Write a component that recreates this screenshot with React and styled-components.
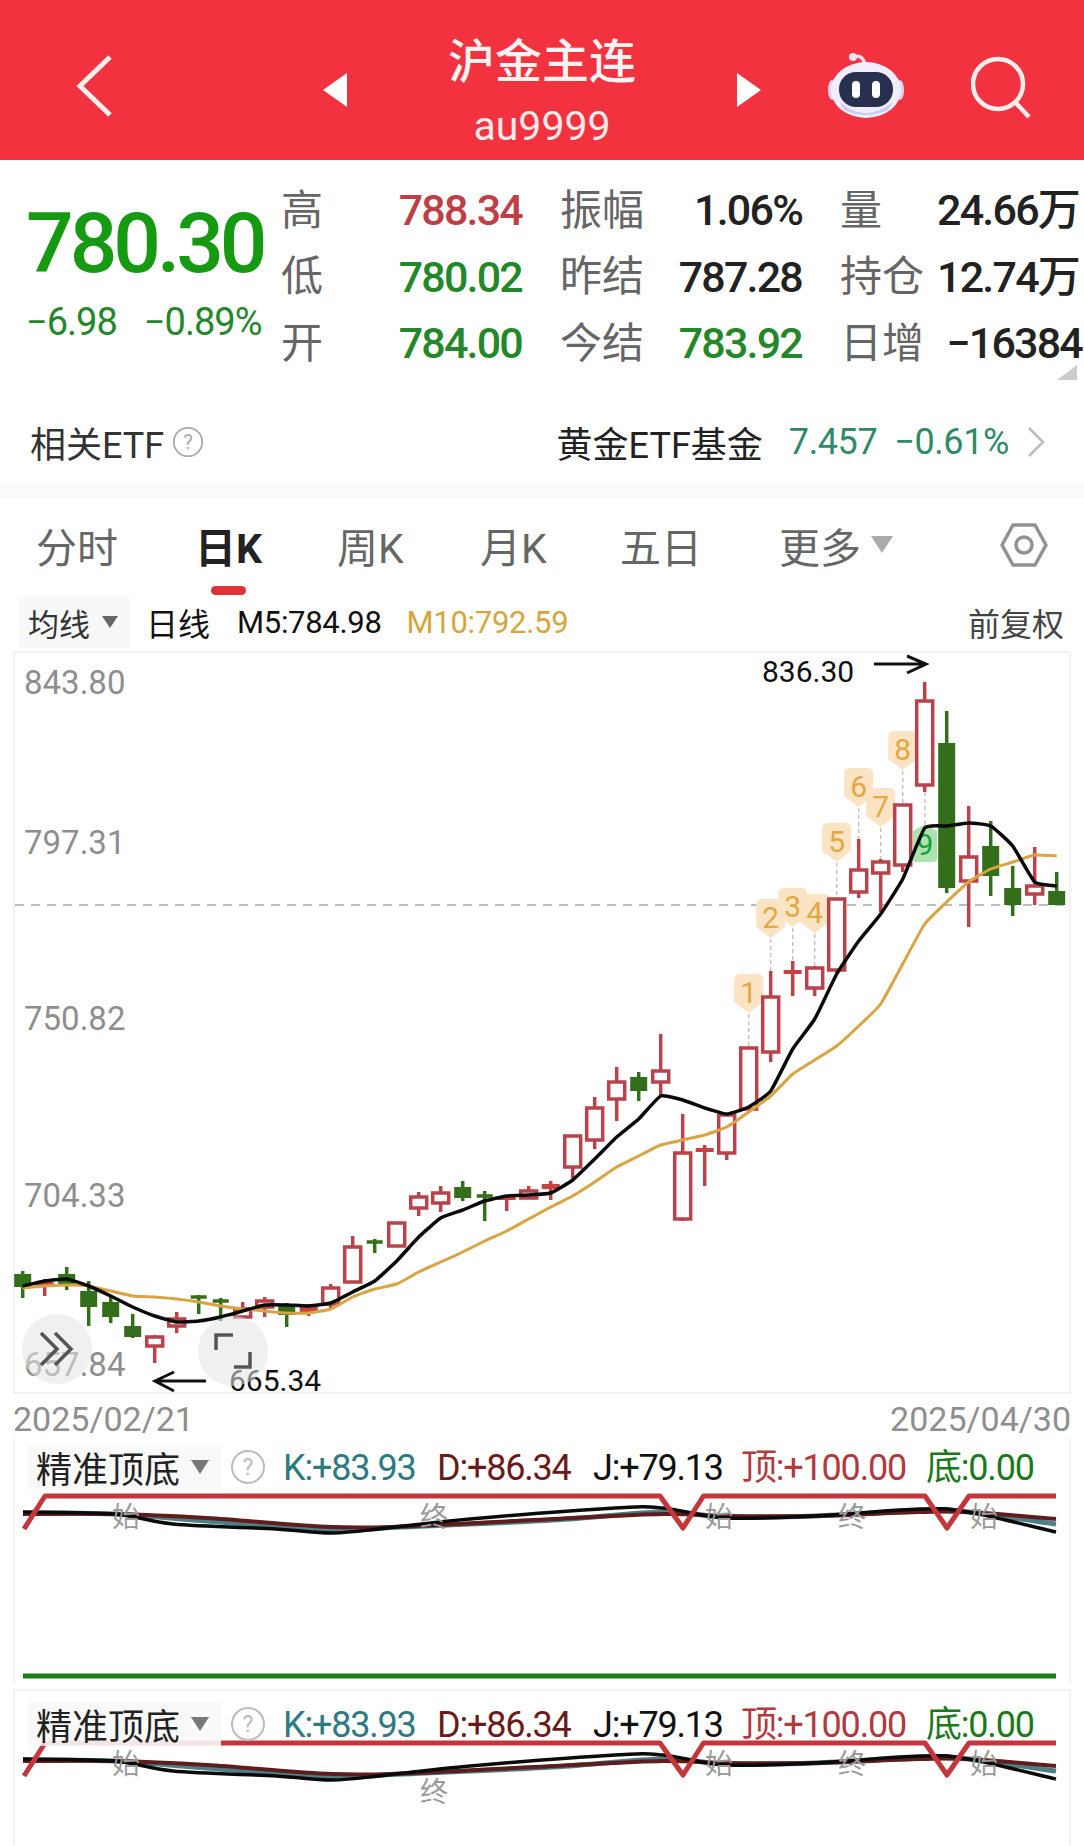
import styled, { createGlobalStyle } from "styled-components";

const GlobalStyle = createGlobalStyle`
	html, body {
		margin: 0;
		padding: 0;
		background: #fff;
	}
	body {
		font-family: Roboto, "Noto Sans CJK SC", sans-serif;
	}
`;

const RED = "#b8434a";
const GREEN = "#336e1a";
const UP_GREEN = "#24872a";

// kind, bodyTop, bodyBottom, wickTop, wickBottom
const candles = [
	["g", 1275, 1288, 1272, 1299],
	["f", 1283, 1288, 1280, 1297],
	["g", 1275, 1285, 1268, 1291],
	["g", 1292, 1308, 1282, 1327],
	["g", 1303, 1318, 1297, 1324],
	["g", 1327, 1338, 1315, 1339],
	["r", 1337, 1347, 1336, 1364],
	["r", 1319, 1327, 1313, 1334],
	["d", 1298, 1298, 1296, 1315],
	["d", 1302, 1302, 1299, 1322],
	["r", 1309, 1318, 1303, 1318],
	["r", 1301, 1308, 1298, 1318],
	["g", 1306, 1316, 1304, 1328],
	["f", 1307, 1313, 1305, 1317],
	["r", 1288, 1305, 1285, 1310],
	["r", 1247, 1283, 1237, 1284],
	["d", 1243, 1243, 1240, 1254],
	["r", 1223, 1247, 1223, 1247],
	["r", 1197, 1209, 1193, 1217],
	["r", 1193, 1204, 1187, 1213],
	["g", 1188, 1199, 1182, 1202],
	["d", 1197, 1197, 1192, 1222],
	["f", 1197, 1201, 1196, 1212],
	["r", 1191, 1199, 1187, 1199],
	["f", 1185, 1190, 1182, 1201],
	["r", 1136, 1168, 1136, 1179],
	["r", 1108, 1141, 1098, 1150],
	["r", 1082, 1100, 1068, 1122],
	["g", 1078, 1092, 1073, 1102],
	["r", 1071, 1083, 1035, 1097],
	["r", 1153, 1220, 1115, 1222],
	["f", 1149, 1153, 1146, 1187],
	["r", 1115, 1154, 1115, 1161],
	["r", 1048, 1110, 1048, 1110],
	["r", 997, 1053, 972, 1063],
	["f", 971, 975, 962, 997],
	["r", 968, 989, 967, 997],
	["r", 899, 971, 899, 975],
	["r", 870, 893, 840, 899],
	["r", 862, 874, 860, 913],
	["r", 805, 866, 805, 873],
	["r", 701, 786, 683, 793],
	["g", 744, 889, 712, 894],
	["r", 857, 882, 807, 928],
	["g", 847, 877, 822, 897],
	["g", 889, 906, 867, 917],
	["r", 886, 895, 848, 906],
	["g", 892, 906, 873, 906],
];

const candleX = (i) => 22.7 + 22 * i;

const ma5 = [1287, 1282, 1280, 1287, 1297, 1308, 1317, 1323, 1322, 1318, 1312, 1306, 1306, 1307, 1304, 1293, 1282, 1262, 1238, 1219, 1211, 1202, 1197, 1196, 1194, 1181, 1160, 1138, 1120, 1097, 1101, 1109, 1115, 1108, 1092, 1050, 1020, 975, 942, 915, 880, 829, 827, 824, 827, 847, 883, 887];
const ma10 = [1289, 1287, 1286, 1287, 1292, 1297, 1298, 1300, 1303, 1307, 1310, 1312, 1314, 1314, 1310, 1298, 1290, 1285, 1273, 1263, 1253, 1242, 1232, 1220, 1208, 1197, 1183, 1168, 1157, 1146, 1141, 1136, 1128, 1113, 1097, 1075, 1061, 1047, 1027, 1005, 965, 925, 903, 883, 870, 863, 856, 857];

// light catmull-rom, just enough to take the edge off the joints
const smoothPath = (pts, tension = 14) => {
	let d = `M${pts[0][0]} ${pts[0][1]}`;
	for (let i = 0; i < pts.length - 1; i++) {
		const p0 = pts[i - 1] || pts[i];
		const p1 = pts[i];
		const p2 = pts[i + 1];
		const p3 = pts[i + 2] || p2;
		const c1x = p1[0] + (p2[0] - p0[0]) / tension;
		const c1y = p1[1] + (p2[1] - p0[1]) / tension;
		const c2x = p2[0] - (p3[0] - p1[0]) / tension;
		const c2y = p2[1] - (p3[1] - p1[1]) / tension;
		d += ` C${c1x} ${c1y} ${c2x} ${c2y} ${p2[0]} ${p2[1]}`;
	}
	return d;
};

const maPath = (ys) => smoothPath(ys.map((y, i) => [candleX(i), y]));

const badges = [
	{ n: 1, i: 33, y: 993 },
	{ n: 2, i: 34, y: 918 },
	{ n: 3, i: 35, y: 907 },
	{ n: 4, i: 36, y: 913 },
	{ n: 5, i: 37, y: 842 },
	{ n: 6, i: 38, y: 787 },
	{ n: 7, i: 39, y: 807 },
	{ n: 8, i: 40, y: 750 },
];

const kdjBlack = [[23, 1513], [114, 1515], [173, 1525], [276, 1530], [332, 1534], [387, 1529], [470, 1520], [615, 1509], [663, 1509], [726, 1519], [815, 1517], [919, 1510], [968, 1513], [1056, 1533]];
const kdjRed = [[23, 1515], [114, 1515], [207, 1519], [332, 1528], [415, 1527], [553, 1520], [663, 1515], [726, 1517], [815, 1517], [919, 1513], [968, 1513], [1056, 1520]];
const kdjTeal = [[23, 1514], [114, 1515], [207, 1522], [332, 1531], [401, 1528], [553, 1521], [663, 1513], [726, 1518], [815, 1517], [919, 1512], [968, 1513], [1056, 1525]];
const topLine = "24,1530 45,1497 660,1497 683,1529 703.5,1497 925,1497 947,1529 969,1497 1056,1497";

const Page = styled.div`
	position: relative;
	width: 1084px;
	height: 1846px;
	overflow: hidden;
	background: #fff;
	color: #222;
`;

const Header = styled.header`
	display: flex;
	align-items: center;
	box-sizing: border-box;
	height: 160px;
	padding: 20px 0 0 76px;
	background: #f2323f;
`;

const BackIcon = styled.svg`
	width: 37px;
	height: 62px;
	margin: -8px 210px 0 0;
`;

const Arrow = styled.svg`
	width: 24px;
	height: 34px;
`;

const TitleBlock = styled.div`
	display: flex;
	flex-direction: column;
	align-items: center;
	gap: 11px;
	width: 390px;
`;

const Title = styled.div`
	font-size: 47px;
	font-weight: 500;
	line-height: 60px;
	color: #fdf2f2;
`;

const Code = styled.div`
	font-size: 41px;
	line-height: 46px;
	color: #fbeaea;
`;

const RobotIcon = styled.svg`
	width: 76px;
	height: 66px;
	margin: -10px 0 0 67px;
`;

const SearchIcon = styled.svg`
	width: 62px;
	height: 64px;
	margin: -6px 0 0 67px;
`;

const Quote = styled.section`
	position: relative;
	display: flex;
	padding-top: 15px;
`;

const PriceBlock = styled.div`
	width: 255px;
	padding-left: 26px;
	color: ${UP_GREEN};
`;

const Price = styled.div`
	margin-top: 29px;
	font-size: 84px;
	font-weight: 500;
	line-height: 80px;
	letter-spacing: -4.1px;
	white-space: nowrap;
	color: #169a12;
`;

const Change = styled.div`
	display: flex;
	gap: 27px;
	margin-top: 18px;
	font-size: 38px;
	line-height: 40px;
	letter-spacing: -1px;
	white-space: nowrap;
`;

const StatGrid = styled.div`
	display: grid;
	grid-template-columns: 241px 242px 242px;
	grid-auto-rows: 66.5px;
	column-gap: 38px;
`;

const Stat = styled.div`
	display: flex;
	align-items: center;
	justify-content: space-between;
	white-space: nowrap;
`;

const StatLabel = styled.span`
	padding-bottom: 4px;
	font-size: 42px;
	color: #666;
`;

const StatValue = styled.span`
	margin-right: ${(props) => props.$inset || 0}px;
	padding-top: 4px;
	font-size: 43px;
	font-weight: 500;
	line-height: 50px;
	letter-spacing: -1.8px;
	color: ${(props) => props.$color || "#222"};
`;

const CornerMark = styled.div`
	position: absolute;
	top: 205px;
	left: 1057px;
	width: 0;
	height: 0;
	border-left: 20px solid transparent;
	border-bottom: 15px solid #ccc;
`;

const EtfRow = styled.div`
	display: flex;
	align-items: center;
	height: 60px;
	margin-top: 37px;
	padding-left: 30px;
	font-size: 36px;
	color: #333;
`;

const EtfHelp = styled.svg`
	width: 32px;
	height: 32px;
	margin-left: 8px;
`;

const EtfName = styled.span`
	margin-left: auto;
	font-size: 36px;
	color: #222;
`;

const EtfNumber = styled.span`
	margin-left: ${(props) => props.$gap}px;
	font-size: 36px;
	letter-spacing: -0.4px;
	color: #2e8a68;
`;

const EtfArrow = styled.svg`
	width: 18px;
	height: 32px;
	margin: 0 39px 0 18px;
`;

const Band = styled.div`
	height: 15px;
	margin-top: 11px;
	background: #fbfbfb;
`;

const Tabs = styled.nav`
	display: grid;
	grid-template-columns: 159px 142px 143px 140px 159px 220px auto;
	align-items: center;
	height: 98px;
	padding-left: 36px;
`;

const Tab = styled.div`
	position: relative;
	display: flex;
	align-items: center;
	gap: 10px;
	box-sizing: border-box;
	height: 98px;
	padding-bottom: 4px;
	font-size: 41px;
	font-weight: ${(props) => (props.$active ? 700 : 400)};
	color: ${(props) => (props.$active ? "#222" : "#666")};
`;

const TabMark = styled.span`
	position: absolute;
	left: 16px;
	bottom: 1px;
	width: 35px;
	height: 9px;
	border-radius: 5px;
	background: #e03237;
`;

const GearIcon = styled.svg`
	width: 50px;
	height: 46px;
	margin-top: -4px;
`;

const Caret = styled.span`
	width: 0;
	height: 0;
	border-left: ${(props) => props.$size}px solid transparent;
	border-right: ${(props) => props.$size}px solid transparent;
	border-top: ${(props) => props.$size * 1.6}px solid ${(props) => props.$color};
`;

const MaRow = styled.div`
	display: flex;
	align-items: center;
	height: 51px;
	margin-top: 1px;
	padding: 0 20px 0 19px;
	font-size: 30px;
	white-space: nowrap;
`;

const MaChip = styled.div`
	display: flex;
	align-items: center;
	gap: 12px;
	box-sizing: border-box;
	width: 111px;
	height: 51px;
	padding-left: 9px;
	background: #f8f8f8;
	font-size: 31px;
	color: #333;
`;

const MaText = styled.span`
	margin-left: ${(props) => props.$gap}px;
	font-size: ${(props) => props.$size}px;
	letter-spacing: ${(props) => props.$spacing || 0}px;
	color: ${(props) => props.$color || "#111"};
`;

const Adjust = styled.span`
	margin-left: auto;
	font-size: 32px;
	color: #444;
`;

const Chart = styled.div`
	position: relative;
	box-sizing: border-box;
	width: 1058px;
	height: 743px;
	margin: 3px 13px 0;
	border: 2px solid #f2f2f2;
`;

const ChartSvg = styled.svg`
	display: block;
	width: 1054px;
	height: 739px;
	overflow: visible;
`;

const AxisText = styled.text`
	font-family: Roboto, sans-serif;
	font-size: 33px;
	fill: #8e8e8e;
`;

const NoteText = styled.text`
	font-family: Roboto, sans-serif;
	font-size: 30px;
	fill: #111;
`;

const BadgeText = styled.text`
	font-family: Roboto, sans-serif;
	font-size: 30px;
	text-anchor: middle;
	fill: ${(props) => props.$color};
`;

const RoundButton = styled.div`
	position: absolute;
	left: ${(props) => props.$left}px;
	top: ${(props) => props.$top}px;
	display: flex;
	align-items: center;
	justify-content: center;
	width: 70px;
	height: 70px;
	border-radius: 50%;
	background: rgba(226, 228, 228, 0.55);
`;

const DateRow = styled.div`
	display: flex;
	align-items: center;
	justify-content: space-between;
	box-sizing: border-box;
	height: 45px;
	padding: 6px 13px 0;
	font-size: 34px;
	color: #8e8e8e;
`;

const Panel = styled.section`
	position: relative;
	box-sizing: border-box;
	width: 1058px;
	height: ${(props) => props.$height}px;
	margin: ${(props) => props.$margin}px 13px 0;
	padding: ${(props) => props.$pad}px 0 0 13px;
	border-left: 2px solid #f2f2f2;
	border-right: 2px solid #f2f2f2;
	border-top: ${(props) => (props.$top ? "2px solid #f2f2f2" : "0")};
	overflow: hidden;
`;

const PanelSvg = styled.svg`
	position: absolute;
	left: 0;
	top: 0;
	width: 1054px;
	height: 100%;
`;

const PanelHead = styled.div`
	position: relative;
	display: flex;
	align-items: center;
	height: 44px;
	white-space: nowrap;
`;

const PanelChip = styled.div`
	display: flex;
	align-items: center;
	gap: 11px;
	box-sizing: border-box;
	width: 193px;
	height: 44px;
	padding-left: 8px;
	background: rgba(247, 247, 247, 0.75);
	font-size: 36px;
	color: #222;
`;

const PanelHelp = styled.svg`
	width: 36px;
	height: 36px;
	margin: 0 17px 0 9px;
`;

const Reading = styled.span`
	width: ${(props) => props.$width}px;
	padding-top: 3px;
	font-size: 36px;
	line-height: 41px;
	letter-spacing: -1.2px;
	color: ${(props) => props.$color};
`;

const MarkText = styled.text`
	font-family: "Noto Sans CJK SC", sans-serif;
	font-size: 28px;
	fill: #9a9a9a;
`;

function Help({ as: Icon, color }) {
	return (
		<Icon viewBox="0 0 36 36">
			<circle cx="18" cy="18" r="16" fill="none" stroke={color} strokeWidth="2" />
			<text x="18" y="26" fontSize="23" fontFamily="Roboto, sans-serif" textAnchor="middle" fill={color}>
				?
			</text>
		</Icon>
	);
}

function Candles() {
	return candles.map(([kind, top, bottom, wickTop, wickBottom], i) => {
		const x = candleX(i);
		const color = kind === "g" || kind === "d" ? GREEN : RED;
		return (
			<g key={i}>
				<line x1={x} x2={x} y1={wickTop} y2={wickBottom} stroke={color} strokeWidth="3.5" />
				{kind === "g" && <rect x={x - 8.5} y={top} width="17" height={bottom - top} fill={GREEN} />}
				{kind === "r" && (
					<rect x={x - 8} y={top + 1} width="16" height={bottom - top - 1} fill="#fff" stroke={RED} strokeWidth="3.5" />
				)}
				{kind === "f" && <rect x={x - 9} y={top} width="18" height={bottom - top} fill="#c9423f" />}
				{kind === "d" && <line x1={x - 8} x2={x + 8} y1={top} y2={top} stroke={color} strokeWidth="3.5" />}
			</g>
		);
	});
}

function Badges() {
	return (
		<>
			{badges.map(({ n, i, y }) => {
				const x = candleX(i);
				return (
					<g key={n}>
						<line x1={x} x2={x} y1={y + 22} y2={candles[i][3]} stroke="#c4c4c4" strokeWidth="1.5" strokeDasharray="4 3" />
						<path
							d={`M${x - 9} ${y - 18} H${x + 9} Q${x + 14.5} ${y - 18} ${x + 14.5} ${y - 12} V${y + 10} L${x} ${y + 21} L${x - 14.5} ${y + 10} V${y - 12} Q${x - 14.5} ${y - 18} ${x - 9} ${y - 18}Z`}
							fill="#fbe4c3"
						/>
						<BadgeText x={x} y={y + 11} $color="#e3a843">
							{n}
						</BadgeText>
					</g>
				);
			})}
			{/* the sell mark points up, the others down */}
			<line x1="925" x2="925" y1="793" y2="825" stroke="#c4c4c4" strokeWidth="1.5" strokeDasharray="4 3" />
			<path d="M925 825 L937 832 V860 Q937 863 934 863 H916 Q913 863 913 860 V832Z" fill="#aee3ae" />
			<BadgeText x="925" y="856" $color="#17a03a">
				9
			</BadgeText>
		</>
	);
}

function IndicatorLines({ shift, marks }) {
	return (
		<>
			<g transform={`translate(0 ${shift})`} fill="none" strokeLinejoin="round">
				<path d={smoothPath(kdjTeal, 6)} stroke="#4d7f86" strokeWidth="5" />
				<path d={smoothPath(kdjRed, 6)} stroke="#5e1c1c" strokeWidth="4" />
				<path d={smoothPath(kdjBlack, 6)} stroke="#0a0a0a" strokeWidth="3.5" />
				<polyline points={topLine} stroke="#c4363c" strokeWidth="5" />
			</g>
			{marks.map(([text, x, y]) => (
				<MarkText key={x} x={x} y={y + shift}>
					{text}
				</MarkText>
			))}
		</>
	);
}

function IndicatorHead() {
	return (
		<PanelHead>
			<PanelChip>
				精准顶底
				<Caret $size={9} $color="#777" />
			</PanelChip>
			<Help as={PanelHelp} color="#bbb" />
			<Reading $width={154} $color="#2d7a80">K:+83.93</Reading>
			<Reading $width={156} $color="#6b1a1a">D:+86.34</Reading>
			<Reading $width={148} $color="#111">J:+79.13</Reading>
			<Reading $width={185} $color="#b03a3e">顶:+100.00</Reading>
			<Reading $width={110} $color="#1a7a1a">底:0.00</Reading>
		</PanelHead>
	);
}

export default function App() {
	return (
		<Page>
			<GlobalStyle />
			<Header>
				<BackIcon viewBox="0 0 37 62">
					<polyline points="34,2 4,31 34,60" fill="none" stroke="#fdeeee" strokeWidth="5" />
				</BackIcon>
				<Arrow viewBox="0 0 24 34">
					<polygon points="24,0 24,34 0,17" fill="#fff" />
				</Arrow>
				<TitleBlock>
					<Title>沪金主连</Title>
					<Code>au9999</Code>
				</TitleBlock>
				<Arrow viewBox="0 0 24 34">
					<polygon points="0,0 0,34 24,17" fill="#fff" />
				</Arrow>
				<RobotIcon viewBox="0 0 76 66">
					<path d="M26 5 Q34 2 37 12" fill="none" stroke="#f1dbe6" strokeWidth="3.5" />
					<circle cx="25" cy="5" r="4" fill="#f6e4ea" />
					<ellipse cx="4" cy="38" rx="4" ry="10" fill="#dcd6f2" />
					<ellipse cx="72" cy="38" rx="4" ry="10" fill="#dcd6f2" />
					<ellipse cx="38" cy="38" rx="35" ry="28" fill="#f1edfc" />
					<path d="M11 50 Q38 72 65 50 L60 58 Q38 68 16 58Z" fill="#c9cdf3" />
					<rect x="11" y="20" width="54" height="35" rx="17" fill="#27304f" />
					<rect x="24" y="29" width="8" height="17" rx="4" fill="#fff" />
					<rect x="44" y="29" width="8" height="17" rx="4" fill="#fff" />
				</RobotIcon>
				<SearchIcon viewBox="0 0 62 64">
					<circle cx="27" cy="29" r="25" fill="none" stroke="#fdeeee" strokeWidth="4.5" />
					<line x1="45" y1="48" x2="58" y2="62" stroke="#fdeeee" strokeWidth="4.5" />
				</SearchIcon>
			</Header>

			<Quote>
				<PriceBlock>
					<Price>780.30</Price>
					<Change>
						<span>−6.98</span>
						<span>−0.89%</span>
					</Change>
				</PriceBlock>
				<StatGrid>
					<Stat><StatLabel>高</StatLabel><StatValue $color="#bf3f47">788.34</StatValue></Stat>
					<Stat><StatLabel>振幅</StatLabel><StatValue>1.06%</StatValue></Stat>
					<Stat><StatLabel>量</StatLabel><StatValue $inset={3}>24.66万</StatValue></Stat>
					<Stat><StatLabel>低</StatLabel><StatValue $color={UP_GREEN}>780.02</StatValue></Stat>
					<Stat><StatLabel>昨结</StatLabel><StatValue>787.28</StatValue></Stat>
					<Stat><StatLabel>持仓</StatLabel><StatValue $inset={3}>12.74万</StatValue></Stat>
					<Stat><StatLabel>开</StatLabel><StatValue $color={UP_GREEN}>784.00</StatValue></Stat>
					<Stat><StatLabel>今结</StatLabel><StatValue $color={UP_GREEN}>783.92</StatValue></Stat>
					<Stat><StatLabel>日增</StatLabel><StatValue>−16384</StatValue></Stat>
				</StatGrid>
				<CornerMark />
			</Quote>

			<EtfRow>
				相关ETF
				<Help as={EtfHelp} color="#aaa" />
				<EtfName>黄金ETF基金</EtfName>
				<EtfNumber $gap={26}>7.457</EtfNumber>
				<EtfNumber $gap={17}>−0.61%</EtfNumber>
				<EtfArrow viewBox="0 0 18 32">
					<polyline points="2,2 16,16 2,30" fill="none" stroke="#bbb" strokeWidth="2.5" />
				</EtfArrow>
			</EtfRow>
			<Band />

			<Tabs>
				<Tab>分时</Tab>
				<Tab $active>
					日K
					<TabMark />
				</Tab>
				<Tab>周K</Tab>
				<Tab>月K</Tab>
				<Tab>五日</Tab>
				<Tab>
					更多
					<Caret $size={11} $color="#aaa" />
				</Tab>
				<GearIcon viewBox="0 0 50 46">
					<polygon points="14,3 36,3 47,23 36,43 14,43 3,23" fill="none" stroke="#929292" strokeWidth="3.5" strokeLinejoin="round" />
					<circle cx="25" cy="23" r="8" fill="none" stroke="#929292" strokeWidth="3.5" />
				</GearIcon>
			</Tabs>

			<MaRow>
				<MaChip>
					均线
					<Caret $size={8} $color="#666" />
				</MaChip>
				<MaText $gap={16} $size={32}>日线</MaText>
				<MaText $gap={27} $size={31} $spacing={-0.3}>M5:784.98</MaText>
				<MaText $gap={25} $size={31} $spacing={-0.3} $color="#d6a63c">M10:792.59</MaText>
				<Adjust>前复权</Adjust>
			</MaRow>

			<Chart>
				<ChartSvg viewBox="15 654 1054 739">
					<line x1="15" x2="1069" y1="906" y2="906" stroke="#a8a8a8" strokeWidth="1.5" strokeDasharray="9 7" />
					<AxisText x="24" y="695">843.80</AxisText>
					<AxisText x="24" y="855">797.31</AxisText>
					<AxisText x="24" y="1031">750.82</AxisText>
					<AxisText x="24" y="1208">704.33</AxisText>
					<AxisText x="24" y="1377">657.84</AxisText>
					<Badges />
					<Candles />
					<path d={maPath(ma10)} fill="none" stroke="#d9a441" strokeWidth="3" />
					<path d={maPath(ma5)} fill="none" stroke="#0a0a0a" strokeWidth="3.5" />
					<NoteText x="762" y="683">836.30</NoteText>
					<path d="M874 665 H925 M907 657 L926 665 L907 674" fill="none" stroke="#111" strokeWidth="3" />
					<NoteText x="229" y="1392">665.34</NoteText>
					<path d="M206 1382 H156 M174 1373 L155 1382 L174 1392" fill="none" stroke="#111" strokeWidth="3" />
				</ChartSvg>
				<RoundButton $left={7} $top={661}>
					<svg width="34" height="36" viewBox="0 0 34 36">
						<path d="M1 2 L17 18 L1 34 M15 2 L31 18 L15 34" fill="none" stroke="#555" strokeWidth="3.5" />
					</svg>
				</RoundButton>
				<RoundButton $left={183} $top={663}>
					<svg width="38" height="36" viewBox="0 0 38 36">
						<path d="M2 17 V2 H19 M36 19 V34 H20" fill="none" stroke="#555" strokeWidth="3.5" />
					</svg>
				</RoundButton>
			</Chart>

			<DateRow>
				<span>2025/02/21</span>
				<span>2025/04/30</span>
			</DateRow>

			<Panel $height={245} $margin={0} $pad={6}>
				<PanelSvg viewBox="15 1440 1054 245">
					<IndicatorLines
						shift={0}
						marks={[
							["始", 112, 1528],
							["终", 420, 1528],
							["始", 705, 1528],
							["终", 838, 1528],
							["始", 970, 1528],
						]}
					/>
					<line x1="23" x2="1056" y1="1677" y2="1677" stroke="#17801a" strokeWidth="5" />
				</PanelSvg>
				<IndicatorHead />
			</Panel>

			<Panel $height={156} $margin={5} $pad={11} $top>
				<PanelSvg viewBox="15 1692 1054 154">
					<IndicatorLines
						shift={247}
						marks={[
							["始", 112, 1528],
							["终", 420, 1556],
							["始", 705, 1528],
							["终", 838, 1528],
							["始", 970, 1528],
						]}
					/>
					{/* the chip's pale layer washes out this end of the red line */}
					<rect x="45" y="1741" width="176" height="6" fill="#fff" opacity="0.6" />
				</PanelSvg>
				<IndicatorHead />
			</Panel>
		</Page>
	);
}
